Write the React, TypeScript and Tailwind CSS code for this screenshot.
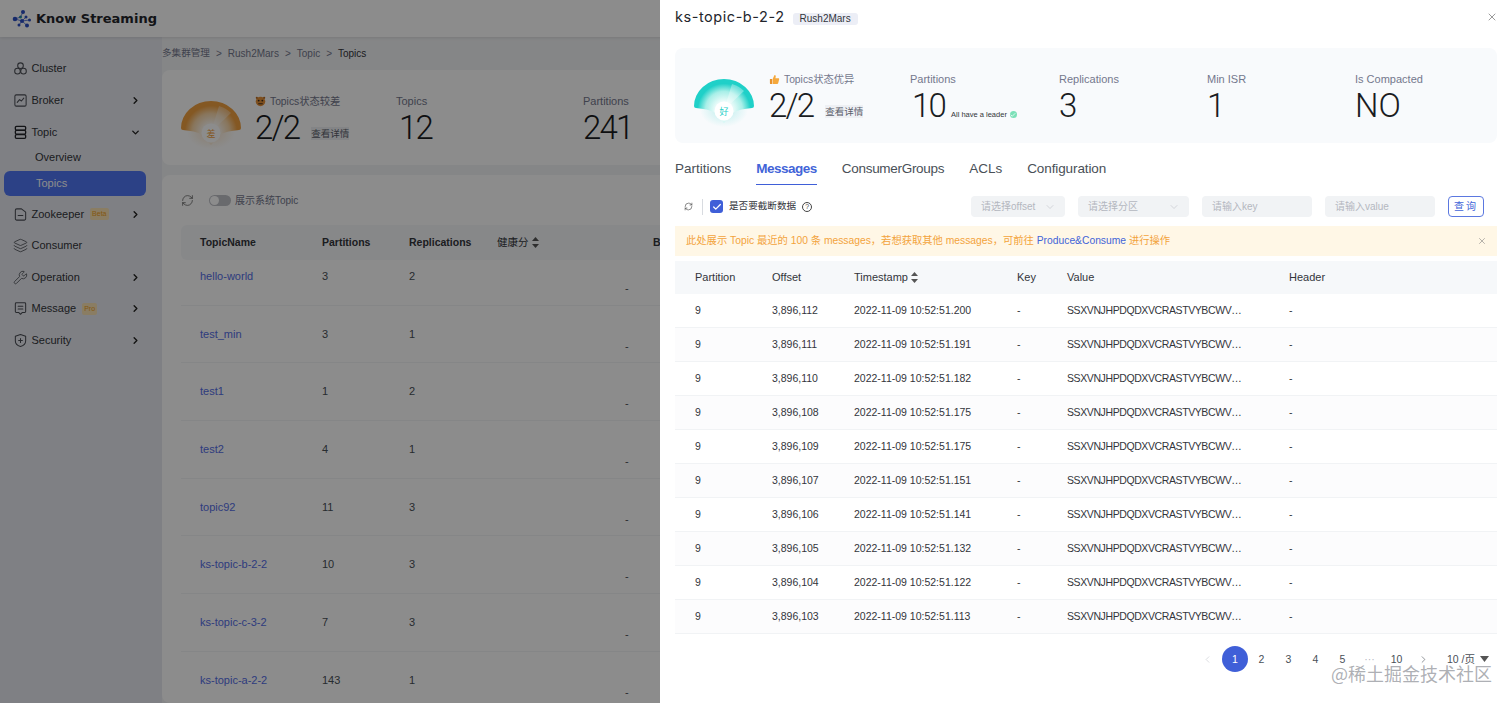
import React from "react";
import { ChevronRight, ChevronDown, Layers, Wrench, RefreshCw, Check, X, ChevronLeft } from "lucide-react";

const sans = "font-['Liberation_Sans','Noto_Sans_CJK_SC',sans-serif]";

function Ic({ children }: { children: React.ReactNode }) {
  return (
    <svg width="15" height="15" viewBox="0 0 16 16" fill="none" stroke="#4a4d55" strokeWidth="1.1" strokeLinecap="round" strokeLinejoin="round">
      {children}
    </svg>
  );
}

const nav: { label: string; icon: React.ReactNode; arrow?: "r" | "d"; badge?: string; h: string }[] = [
  { label: "Cluster", h: "h-[32px]", icon: <Ic><circle cx="8" cy="5" r="3" /><circle cx="4.8" cy="10.8" r="3" /><circle cx="11.2" cy="10.8" r="3" /></Ic> },
  { label: "Broker", h: "h-[32px]", arrow: "r", icon: <Ic><rect x="2" y="2" width="12" height="12" rx="1.5" /><path d="M4.5 10l2.5-3 2 1.5 2.5-3" /></Ic> },
  { label: "Topic", h: "h-[32px]", arrow: "d", icon: <svg width="15" height="15" viewBox="0 0 16 16" fill="none" stroke="#23252b" strokeWidth="1.4"><rect x="2.5" y="1.5" width="11" height="4" rx="1.2" /><rect x="2.5" y="5.8" width="11" height="4" rx="1.2" /><rect x="2.5" y="10.2" width="11" height="4" rx="1.2" /></svg> },
];
const nav2: typeof nav = [
  { label: "Zookeeper", h: "h-[30px]", arrow: "r", badge: "Beta", icon: <Ic><path d="M2.5 3.5a1.5 1.5 0 0 1 1.5-1.5h5l4.5 3.5V12.5a1.5 1.5 0 0 1-1.5 1.5H4a1.5 1.5 0 0 1-1.5-1.5z" /><path d="M5.5 9h5" /></Ic> },
  { label: "Consumer", h: "h-[32px]", icon: <Layers size={15} color="#4a4d55" strokeWidth={1.3} /> },
  { label: "Operation", h: "h-[32px]", arrow: "r", icon: <Wrench size={15} color="#4a4d55" strokeWidth={1.3} /> },
  { label: "Message", h: "h-[31px]", arrow: "r", badge: "Pro", icon: <Ic><path d="M3.5 1.8h9a1 1 0 0 1 1 1v8.4a1 1 0 0 1-1 1H10L8 14.2 6 12.2H3.5a1 1 0 0 1-1-1V2.800a1 1 0 0 1 1-1z" /><path d="M5.500 5.500h5M5.500 8.500h5" /></Ic> },
  { label: "Security", h: "h-[32px]", arrow: "r", icon: <Ic><path d="M8 1.500l5.500 2v5c0 3-2.500 5-5.500 6-3-1-5.500-3-5.500-6v-5z" /><path d="M8 6v4M6 8h4" /></Ic> },
];

function NavItem({ it }: { it: (typeof nav)[number] }) {
  return (
    <div className={`flex items-center ${it.h} pl-[13px] pr-[21px] text-[11px] text-[#33353b]`}>
      <span className="w-[18px] flex shrink-0">{it.icon}</span>
      <span className="ml-[0.5px]">{it.label}</span>
      {it.badge && <span className="ml-[6px] px-[2px] rounded-[2px] bg-[#fbe3b5] text-[#f0a020] text-[7px] leading-[12px]">{it.badge}</span>}
      <span className="flex-1" />
      {it.arrow === "r" && <ChevronRight size={11} color="#222" strokeWidth={3} />}
      {it.arrow === "d" && <ChevronDown size={11} color="#222" strokeWidth={3} />}
    </div>
  );
}

function Gauge({ ring, mid, label, id }: { ring: string; mid: string; label: string; id: string }) {
  return (
    <svg width="60" height="60" viewBox="0 0 60 60" className="mt-[26px]">
      <defs>
        <radialGradient id={id} gradientUnits="userSpaceOnUse" cx="30" cy="31" r="30">
          <stop offset="0.2" stopColor="#fff" />
          <stop offset="0.62" stopColor={mid} />
          <stop offset="0.88" stopColor={ring} />
          <stop offset="1" stopColor={ring} />
        </radialGradient>
        <radialGradient id={id + "s"} cx="0.5" cy="0.5" r="0.5">
          <stop offset="0" stopColor={ring} stopOpacity="0.28" />
          <stop offset="1" stopColor={ring} stopOpacity="0" />
        </radialGradient>
      </defs>
      <ellipse cx="30" cy="31" rx="24" ry="17" fill={`url(#${id}s)`} />
      <path d="M0 27 A30 27 0 0 1 60 27 Q60 29 58 29 Q46 30 40 33 L30 44 L20 33 Q14 30 2 29 Q0 29 0 27 Z" fill={`url(#${id})`} />
      <path d="M30 31 L50 12 A26 26 0 0 0 38 5 Z" fill="#fff" opacity="0.35" />
      <circle cx="30" cy="32" r="9.500" fill="#fff" />
      <text x="30" y="35.500" textAnchor="middle" fontSize="9" fill={ring} fontFamily="'Noto Sans CJK SC',sans-serif">{label}</text>
    </svg>
  );
}

const Thumb = () => (
  <svg width="11" height="11" viewBox="0 0 12 12"><path d="M1 5.500h2.500V11H2a1 1 0 0 1-1-1z" fill="#e8912c" /><path d="M4 5.500L6 1c1.300 0 1.600 1 1.300 2L7 4.500h3.200c.8 0 1.100.7.900 1.300L10 10.200c-.2.500-.5.800-1 .8H4z" fill="#f5a83c" /></svg>
);
const Tiger = () => (
  <svg width="11" height="11" viewBox="0 0 12 12"><circle cx="6" cy="6" r="5.200" fill="#e69138" /><circle cx="4" cy="5" r="1" fill="#3a2a1a" /><circle cx="8" cy="5" r="1" fill="#3a2a1a" /><path d="M3.500 8.500h5" stroke="#3a2a1a" /><circle cx="2" cy="2" r="1.200" fill="#b86a20" /><circle cx="10" cy="2" r="1.200" fill="#b86a20" /></svg>
);

const numBase = "font-['Roboto',sans-serif] text-[33px] leading-[38px] font-light text-[#1a1c22]";
const num = `${numBase} tracking-[-1.800px]`;
const label = "text-[11px] leading-[15px] text-[#74788d]";
const block = "mt-[6px]";

function Stat({ name, value, w, pad }: { name: string; value: string; w: string; pad?: string }) {
  return (
    <div className={`${w} shrink-0 ${block}`}>
      <div className={label}>{name}</div>
      <div className={`${value === "NO" ? numBase : num} ${pad ?? ""}`}>{value}</div>
    </div>
  );
}

function Status({ icon, text, ml }: { icon: React.ReactNode; text: string; ml: string }) {
  return (
    <div className={`w-[141px] shrink-0 ${block}`}>
      <div className="flex items-center gap-[4px] text-[10.300px] leading-[15px] text-[#74788d]">{icon}<span>{text}</span></div>
      <div className="flex items-end">
        <span className={num}>2/2</span>
        <span className={`${ml} mb-[7px] text-[9.500px] leading-[13px] text-[#5a5e6a] bg-[#eef0f4]`}>查看详情</span>
      </div>
    </div>
  );
}

const topics: [string, number, number][] = [
  ["hello-world", 3, 2],
  ["test_min", 3, 1],
  ["test1", 1, 2],
  ["test2", 4, 1],
  ["topic92", 11, 3],
  ["ks-topic-b-2-2", 10, 3],
  ["ks-topic-c-3-2", 7, 3],
  ["ks-topic-a-2-2", 143, 1],
];

const leftCols = "grid grid-cols-[122px_87px_88px_156px_1fr]";

function Page() {
  return (
    <div className="flex w-full h-full flex-col">
      <header className="h-[37px] shrink-0 bg-white flex items-center pl-[12px] shadow-[0_1px_3px_rgba(0,0,0,0.1)] relative">
        <svg width="20" height="20" viewBox="0 0 20 20" fill="#2b4fc4">
          <circle cx="11" cy="3" r="2" /><circle cx="3" cy="10" r="2.300" /><circle cx="8.500" cy="8" r="1.500" fill="#1f9f9f" /><circle cx="14" cy="8" r="1.500" /><circle cx="17.500" cy="11" r="1.500" /><circle cx="10" cy="12" r="2" /><circle cx="7" cy="16" r="1.500" /><circle cx="15" cy="16.500" r="2" />
          <path d="M11 3L8.500 8L3 10L10 12L7 16M10 12L15 16.500M14 8L10 12L17.500 11" stroke="#2b4fc4" strokeWidth="0.700" fill="none" />
        </svg>
        <span className="ml-[4px] font-['DejaVu_Sans',sans-serif] font-bold text-[13px] text-[#23252b]">Know Streaming</span>
      </header>
      <div className="flex flex-1 min-h-0">
        <aside className="w-[162px] shrink-0 bg-[#e8eaf0] pt-[15px]">
          {nav.map((it) => <NavItem key={it.label} it={it} />)}
          <div className="pl-[35px] h-[20px] mt-[-1px] flex items-center text-[11px] text-[#33353b]">Overview</div>
          <div className="ml-[4px] mr-[16px] mt-[3px] mb-[4px] h-[25px] rounded-[6px] bg-[#5077f5] pl-[32px] flex items-center text-[11px] text-[#fff] relative top-[1px]">Topics</div>
          {nav2.map((it) => <NavItem key={it.label} it={it} />)}
        </aside>
        <main className="flex-1 min-w-0 bg-[#f3f4f6] flex flex-col overflow-hidden">
          <div className="h-[33px] shrink-0 flex items-center text-[10px] text-[#74788d] gap-[6px]">
            <span className="text-[9.600px]">多集群管理</span><span>&gt;</span><span>Rush2Mars</span><span>&gt;</span><span>Topic</span><span>&gt;</span><span className="text-[#33353b]">Topics</span>
          </div>
          <section className="h-[95px] shrink-0 bg-white rounded-l-[8px] flex items-center pl-[19px]">
            <div className="w-[74px] shrink-0"><Gauge id="g1" ring="#f0a040" mid="#f8d6a8" label="差" /></div>
            <Status icon={<Tiger />} text="Topics状态较差" ml="ml-[12px]" />
            <Stat name="Topics" value="12" w="w-[187px]" pad="pl-[3px]" />
            <Stat name="Partitions" value="241" w="w-[100px]" />
          </section>
          <section className="flex-1 mt-[10px] bg-white rounded-l-[8px] pl-[19px] overflow-hidden">
            <div className="h-[50px] flex items-center">
              <RefreshCw size={13} color="#555" strokeWidth={1.300} />
              <span className="ml-[15px] w-[22px] h-[11px] rounded-full bg-[#bfc1c7] flex items-center pl-[1px]"><span className="w-[9px] h-[9px] rounded-full bg-white" /></span>
              <span className="ml-[4px] text-[10px] text-[#74788d]">展示系统Topic</span>
            </div>
            <div className={`${leftCols} h-[35px] items-center rounded-l-[6px] bg-[#f6f8fa] pl-[19px] text-[10.500px] font-bold text-[#33353b]`}>
              <span>TopicName</span><span>Partitions</span><span>Replications</span>
              <span className="flex items-center gap-[3px] font-normal">健康分<svg width="7" height="11" viewBox="0 0 7 11" fill="#555"><path d="M3.500 0L7 4H0zM3.500 11L0 7h7z" /></svg></span>
              <span>B</span>
            </div>
            {topics.map(([n, p, r], i) => (
              <div key={n} className={`${leftCols} ${i === 0 ? "h-[45.500px] pt-[8px]" : "h-[57.700px] pt-[20px]"} pl-[19px] border-b border-[#f3f4f6] text-[11px] text-[#495057]`}>
                <span className="text-[#556ee6]">{n}</span><span>{p}</span><span>{r}</span>
                <span className="pl-[128px] pt-[12px]">-</span>
                <span />
              </div>
            ))}
          </section>
        </main>
      </div>
    </div>
  );
}

const rows: [string, string][] = [
  ["3,896,112", "2022-11-09 10:52:51.200"],
  ["3,896,111", "2022-11-09 10:52:51.191"],
  ["3,896,110", "2022-11-09 10:52:51.182"],
  ["3,896,108", "2022-11-09 10:52:51.175"],
  ["3,896,109", "2022-11-09 10:52:51.175"],
  ["3,896,107", "2022-11-09 10:52:51.151"],
  ["3,896,106", "2022-11-09 10:52:51.141"],
  ["3,896,105", "2022-11-09 10:52:51.132"],
  ["3,896,104", "2022-11-09 10:52:51.122"],
  ["3,896,103", "2022-11-09 10:52:51.113"],
];

const cols = "grid grid-cols-[77px_82px_163px_50px_222px_1fr] pl-[20px] items-center";

function Field({ w, text, arrow }: { w: string; text: string; arrow?: boolean }) {
  return (
    <div className={`${w} h-[21px] rounded-[4px] bg-[#f1f3f5] flex items-center pl-[10px] pr-[9px] text-[10px] text-[#b4b7bf] shrink-0`}>
      <span className="flex-1">{text}</span>
      {arrow && <ChevronDown size={12} color="#b4b7bf" strokeWidth={1} />}
    </div>
  );
}

function Drawer() {
  return (
    <aside className={`absolute top-0 right-0 bottom-0 w-[852px] bg-white px-[15px] overflow-hidden ${sans}`}>
      <div className="h-[48px] flex items-start pt-[8px] relative">
        <span className="text-[14.500px] leading-[18px] text-[#23252b] font-['Inter',sans-serif] tracking-[0.550px]">ks-topic-b-2-2</span>
        <span className="ml-[8px] mt-[5px] h-[12px] px-[7px] rounded-[3px] bg-[#eceef6] text-[10px] leading-[12px] text-[#33353b]">Rush2Mars</span>
        <X size={12} color="#555" strokeWidth={1.200} className="absolute right-[-1px] top-[11px]" />
      </div>
      <section className="h-[95px] rounded-[8px] bg-[#f8fafc] flex items-center pl-[19px]">
        <div className="w-[75px] shrink-0"><Gauge id="g2" ring="#1fd0c8" mid="#a8efe8" label="好" /></div>
        <Status icon={<Thumb />} text="Topics状态优异" ml="ml-[12px]" />
        <div className={`w-[149px] shrink-0 ${block}`}>
          <div className={label}>Partitions</div>
          <div className="flex items-end">
            <span className={`${num} ml-[2px]`}>10</span>
            <span className="ml-[6px] mb-[5px] text-[7.500px] text-[#33353b]">All have a leader</span>
            <span className="ml-[3px] mb-[7px] w-[7px] h-[7px] rounded-full bg-[#7be0b8] flex items-center justify-center"><Check size={6} color="#fff" strokeWidth={3} /></span>
          </div>
        </div>
        <Stat name="Replications" value="3" w="w-[148px]" />
        <Stat name="Min ISR" value="1" w="w-[148px]" />
        <Stat name="Is Compacted" value="NO" w="w-[120px]" />
      </section>
      <nav className="h-[42px] flex items-end text-[13.500px] text-[#495057]">
        <span className="pb-[6px]">Partitions</span>
        <span className="ml-[25px] pb-[5px] border-b border-[#3f5fd8] font-bold text-[#4264d8] tracking-[-0.500px]">Messages</span>
        <span className="ml-[25px] pb-[6px] tracking-[-0.300px]">ConsumerGroups</span>
        <span className="ml-[25px] pb-[6px]">ACLs</span>
        <span className="ml-[25px] pb-[6px] tracking-[-0.100px]">Configuration</span>
      </nav>
      <div className="h-[33px] mt-[5px] flex items-center pl-[9px]">
        <RefreshCw size={9} color="#333" strokeWidth={1.500} />
        <span className="ml-[9px] w-px h-[16px] bg-[#d8dbe0]" />
        <span className="ml-[7px] w-[13px] h-[13px] rounded-[3px] bg-[#3f5fd8] flex items-center justify-center"><Check size={10} color="#fff" strokeWidth={3} /></span>
        <span className="ml-[6px] text-[9.600px] text-[#33353b]">是否要截断数据</span>
        <span className="ml-[6px] w-[10px] h-[10px] rounded-full border border-[#444] text-[7px] leading-[8px] text-center text-[#444]">?</span>
        <span className="flex-1" />
        <div className="flex items-center gap-[13px] pr-[13px]">
          <Field w="w-[94px]" text="请选择offset" arrow />
          <Field w="w-[111px]" text="请选择分区" arrow />
          <Field w="w-[110px]" text="请输入key" />
          <Field w="w-[110px]" text="请输入value" />
          <button className="w-[36px] h-[21px] rounded-[4px] border border-[#5b78e0] text-[10px] text-[#4264d8] tracking-[2px]">查询</button>
        </div>
      </div>
      <div className="h-[30px] mt-[3px] bg-[#fff7e6] flex items-center pl-[11px] pr-[10px] text-[10.300px] text-[#f3a33c]">
        <span>此处展示 Topic 最近的 100 条 messages，若想获取其他 messages，可前往 <span className="text-[#4264d8]">Produce&amp;Consume</span> 进行操作</span>
        <span className="flex-1" />
        <X size={10} color="#777" strokeWidth={1.300} />
      </div>
      <div className={`${cols} h-[33px] mt-[5px] bg-[#f6f8fa] text-[11px] text-[#33353b]`}>
        <span>Partition</span><span>Offset</span>
        <span className="flex items-center gap-[3px]">Timestamp<svg width="7" height="11" viewBox="0 0 7 11" fill="#555"><path d="M3.500 0L7 4H0zM3.500 11L0 7h7z" /></svg></span>
        <span>Key</span><span>Value</span><span>Header</span>
      </div>
      {rows.map(([o, t], i) => (
        <div key={o} className={`${cols} h-[34px] pt-[1px] border-b border-[#f1f3f5] text-[10.500px] text-[#33353b] ${i % 2 ? "bg-[#fcfcfd]" : "bg-white"}`}>
          <span>9</span><span>{o}</span><span>{t}</span><span>-</span>
          <span className="tracking-[-0.400px]">SSXVNJHPDQDXVCRASTVYBCWV…</span><span>-</span>
        </div>
      ))}
      <div className="mt-[12px] h-[26px] pr-[8px] flex items-center justify-end text-[10.500px] leading-[12px] text-[#495057]">
        <ChevronLeft size={11} color="#c4c6cc" strokeWidth={1.300} />
        <span className="ml-[9px] w-[26px] h-[26px] rounded-full bg-[#3f5fd8] text-white flex items-center justify-center">1</span>
        {["2", "3", "4", "5", "···", "10"].map((p) => (
          <span key={p} className={`w-[27px] text-center ${p === "···" ? "text-[#b4b7bf]" : ""}`}>{p}</span>
        ))}
        <ChevronRight size={11} color="#495057" strokeWidth={1.300} className="ml-[8px]" />
        <span className="ml-[18px]">10 /页</span>
        <svg width="9" height="6" viewBox="0 0 9 6" fill="#555" className="ml-[5px]"><path d="M0 0h9L4.500 6z" /></svg>
      </div>
      <span className="absolute right-[20px] bottom-[22px] text-[18px] leading-[16px] text-[#8a8d94]/70 font-['Noto_Sans_CJK_SC',sans-serif]">@稀土掘金技术社区</span>
    </aside>
  );
}

export default function App() {
  return (
    <div className={`relative w-[1512px] h-[703px] overflow-hidden ${sans}`}>
      <Page />
      <div className="absolute inset-0 bg-black/45" />
      <Drawer />
    </div>
  );
}
